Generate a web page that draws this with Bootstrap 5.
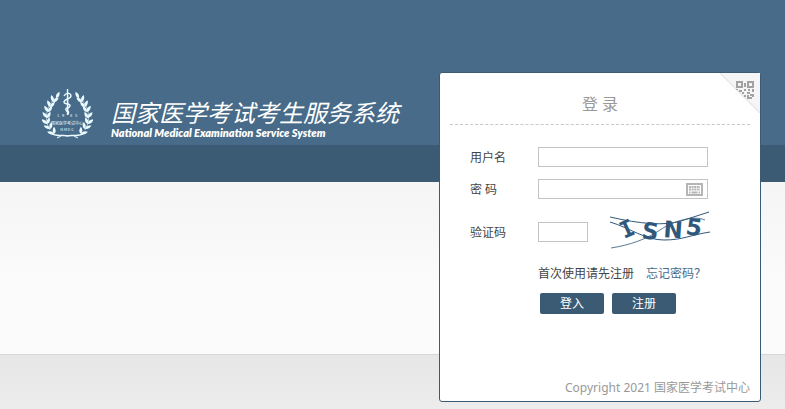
<!DOCTYPE html>
<html lang="zh-CN">
<head>
<meta charset="utf-8">
<meta name="viewport" content="width=device-width, initial-scale=1">
<title>国家医学考试考生服务系统</title>
<link href="https://cdn.jsdelivr.net/npm/bootstrap@5.3.0/dist/css/bootstrap.min.css" rel="stylesheet">
<style>
body {
  font: 12px/18px "Noto Sans", "Noto Sans CJK SC", sans-serif;
  color: #444;
  background: #ebebeb;
}
.page {
  background:
    linear-gradient(#476b88, #476b88) 0 0 / 100% 145px no-repeat,
    linear-gradient(#3b5a73, #3b5a73) 0 145px / 100% 37px no-repeat,
    linear-gradient(#f5f5f5, #fbfbfb 60%, #fbfbfb) 0 182px / 100% 172px no-repeat,
    linear-gradient(#d8d8d8, #d8d8d8) 0 354px / 100% 1px no-repeat,
    linear-gradient(#e6e6e6, #ededed) 0 355px / 100% 60px no-repeat;
  padding: 72px 24px 7px 42px;
}
.brand { gap: 18px; padding-top: 16px; color: #fff; }
.brand-name { font: italic 400 24px/24px "Noto Sans CJK SC", sans-serif; margin-top: 12px; }
.brand-en { font: italic 800 11px/12px Lato, sans-serif; padding-top: 3px; }
.login-card {
  width: 322px;
  min-height: 330px;
  border: 1px solid #3b5a73;
  border-radius: 3px;
  background: #fff;
}
.login-title {
  margin: 0 10px;
  padding: 19px 0 8px;
  font-size: 16px;
  line-height: 24px;
  font-weight: 400;
  color: #999;
  border-bottom: 1px dashed #c8c8c8;
}
.login-form { padding: 22px 30px 0; }
.form-line { margin-bottom: 12px; }
.login-form label { flex: 0 0 68px; padding-top: 2px; }
.field {
  width: 170px;
  height: 20px;
  padding: 0 4px;
  border: 1px solid #c4c4c4;
  border-radius: 0;
  font-size: 12px;
}
.field-code { width: 50px; margin-right: 22px; }
.field-password { padding-right: 26px; }
.key-button { right: 5px; top: 4px; line-height: 0; }
.code-line { height: 42px; margin-bottom: 12px; }
.help-line { padding-left: 68px; gap: 12px; margin-bottom: 10px; }
.help-line a { color: #476b88; }
.action-line { padding-left: 70px; gap: 8px; }
.action {
  width: 64px;
  height: 21px;
  padding: 0;
  font-size: 12px;
  line-height: 19px;
  color: #fff;
  background: #3b5a73;
  border-radius: 2px;
}
.action:hover { color: #fff; background: #476b88; }
.copyright { padding: 0 10px 4px; color: #999; }
.corner { line-height: 0; }
.tiny { font-family: "Noto Sans CJK SC", sans-serif; font-size: 4px; }
.code-text { font: bold 23px "DejaVu Sans", sans-serif; }
.code-slab { font-family: "DejaVu Sans Mono", monospace; }
</style>
</head>
<body>
<div class="page min-vh-100 d-flex flex-wrap justify-content-between align-items-start">
  <header class="brand d-flex">
    <svg width="51" height="52" viewBox="0 0 51 52" fill="#eafaff" aria-hidden="true">
      <defs>
        <path id="leaf" d="M0 0C-3-1-4-3-4-6C-1-5 1-3 0 0Z"/>
        <g id="branch">
          <path d="M14 10C5 16 1 31 8 42" fill="none" stroke="#eafaff" stroke-width=".6"/>
          <use href="#leaf" transform="translate(14 10) rotate(62)"/>
          <use href="#leaf" transform="translate(11 14) rotate(20)"/>
          <use href="#leaf" transform="translate(11 14) rotate(85)"/>
          <use href="#leaf" transform="translate(8 19) rotate(12)"/>
          <use href="#leaf" transform="translate(8 19) rotate(76)"/>
          <use href="#leaf" transform="translate(6 24) rotate(2)"/>
          <use href="#leaf" transform="translate(6 24) rotate(68)"/>
          <use href="#leaf" transform="translate(5 30) rotate(-5)"/>
          <use href="#leaf" transform="translate(5 30) rotate(62)"/>
          <use href="#leaf" transform="translate(5 36) rotate(-15)"/>
          <use href="#leaf" transform="translate(5 36) rotate(54)"/>
          <use href="#leaf" transform="translate(8 41) rotate(-28)"/>
          <use href="#leaf" transform="translate(8 41) rotate(44)"/>
          <use href="#leaf" transform="translate(12 46) rotate(-38)"/>
          <use href="#leaf" transform="translate(12 46) rotate(34)"/>
          <path d="M9 45C15 50 20 46 26 48" fill="none" stroke="#eafaff" stroke-width="1.6"/>
          <path d="M15 50Q18 49 20 47" fill="none" stroke="#eafaff"/>
        </g>
      </defs>
      <use href="#branch"/>
      <use href="#branch" transform="translate(51 0) scale(-1 1)"/>
      <path d="M24.8 1h1.4l.4 26h-1.8z"/>
      <path d="M22 8C24 4 29 5 29 8S22 11 22 14S29 15 28 18S23 19 24 22S28 22 26 26" fill="none" stroke="#eafaff" stroke-width="1.4"/>
      <text class="tiny" x="15" y="29">1</text>
      <text class="tiny" x="20" y="29">9</text>
      <text class="tiny" x="28" y="29">8</text>
      <text class="tiny" x="33" y="29">5</text>
      <text class="tiny" x="25" y="37" text-anchor="middle">国家医学考试中心</text>
      <text class="tiny" x="25" y="43" text-anchor="middle">N M E C</text>
    </svg>
    <div>
      <h1 class="brand-name mb-0">国家医学考试考生服务系统</h1>
      <p class="brand-en mb-0">National Medical Examination Service System</p>
    </div>
  </header>

  <main class="login-card position-relative d-flex flex-column">
    <a href="#" class="corner position-absolute top-0 end-0" aria-label="扫码登录">
      <svg width="40" height="40" viewBox="0 0 40 40">
        <path d="M0 0H40V40Z" fill="#f5f5f5"/>
        <path d="M0 0L40 40" stroke="#e8e8e8" stroke-width="1.5"/>
        <path fill="#a2a2a2" fill-rule="evenodd" d="M16 8h7v7h-7zM18 10v3h3v-3zM27 8h7v7h-7zM29 10v3h3v-3zM24 10h2v4h-2zM16 16h2v1h-2zM19 17h3v2h-3zM24 16h2v2h-2zM28 16h2v2h-2zM32 16h2v3h-2zM22 19h2v2h-2zM27 19h3v2h-3zM30 21h2v2h-2zM24 22h2v2h-2zM27 22h2v4h-2zM29 24h3v2h-3zM32 21h2v3h-2z"/>
      </svg>
    </a>
    <h2 class="login-title text-center">登 录</h2>
    <form class="login-form" onsubmit="return false">
      <div class="form-line d-flex align-items-center">
        <label for="user">用户名</label>
        <input class="field" id="user" type="text">
      </div>
      <div class="form-line d-flex align-items-center">
        <label for="password">密 码</label>
        <div class="position-relative d-flex">
          <input class="field field-password" id="password" type="password">
          <button class="key-button position-absolute border-0 p-0 bg-transparent" type="button" aria-label="软键盘">
            <svg width="17" height="13" viewBox="0 0 17 13">
              <path fill="#b5b5b5" d="M0 0H17V13H0z"/>
              <path fill="#fff" d="M2 2H15V11H2z"/>
              <path d="M3 4H14M3 6.500H14" stroke="#b5b5b5" stroke-width="2" stroke-dasharray="2 .6"/>
              <path d="M3 9.500H4.500M5.500 9.500H11.500M12.500 9.500H14" stroke="#b5b5b5" stroke-width="2"/>
            </svg>
          </button>
        </div>
      </div>
      <div class="code-line d-flex align-items-center">
        <label for="code">验证码</label>
        <input class="field field-code" id="code" type="text">
        <svg width="101" height="42" viewBox="0 0 101 42" fill="#31587a" class="flex-shrink-0">
          <g class="code-text">
            <text class="code-slab" transform="translate(14 28) rotate(-24)">I</text>
            <text transform="translate(31 27) rotate(8)">S</text>
            <text transform="translate(53 26) rotate(4)">N</text>
            <text transform="translate(75 23) rotate(8)">5</text>
          </g>
          <g fill="none" stroke="#31587a">
            <path d="M0 6C30 13 55 15 71 10L99 1"/>
            <path d="M0 11C20 17 35 29 54 29S80 24 100 21"/>
            <path d="M1 37C20 34 37 28 50 19S84 4 95 9" stroke-width=".8"/>
          </g>
        </svg>
      </div>
      <div class="help-line d-flex">
        <span>首次使用请先注册</span>
        <a href="#" class="text-decoration-none">忘记密码？</a>
      </div>
      <div class="action-line d-flex">
        <button type="submit" class="btn border-0 action">登入</button>
        <button type="button" class="btn border-0 action">注册</button>
      </div>
    </form>
    <footer class="copyright mt-auto text-end">Copyright 2021 国家医学考试中心</footer>
  </main>
</div>
<script src="https://cdn.jsdelivr.net/npm/bootstrap@5.3.0/dist/js/bootstrap.bundle.min.js"></script>
</body>
</html>
